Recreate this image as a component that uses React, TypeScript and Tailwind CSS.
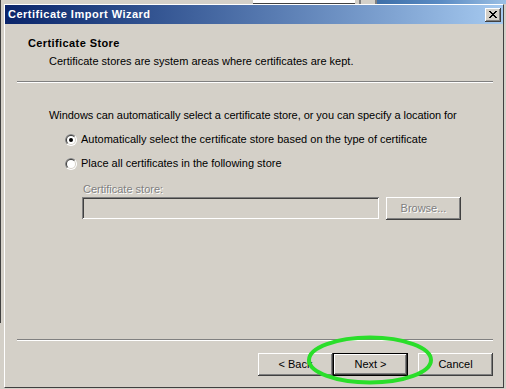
import React from "react";

function Radio({ checked }: { checked?: boolean }) {
  const r1 = 6, r2 = 5;
  const d = (r: number) => {
    const k = r / Math.SQRT2;
    return `M ${6 - k} ${6 + k} A ${r} ${r} 0 0 1 ${6 + k} ${6 - k} Z`;
  };
  return (
    <svg width="12" height="12" viewBox="0 0 12 12" className="shrink-0">
      <circle cx="6" cy="6" r={r1} fill="#ffffff" />
      <path d={d(r1)} fill="#808080" />
      <circle cx="6" cy="6" r={r2} fill="#d4d0c8" />
      <path d={d(r2)} fill="#404040" />
      <circle cx="6" cy="6" r="4" fill="#ffffff" />
      {checked && <circle cx="6" cy="6" r="2" fill="#000000" />}
    </svg>
  );
}

const raised =
  "shadow-[inset_-1px_-1px_#404040,inset_1px_1px_#ffffff,inset_-2px_-2px_#808080,inset_2px_2px_#d4d0c8]";
const raisedDefault =
  "shadow-[inset_-1px_-1px_#000000,inset_1px_1px_#000000,inset_-2px_-2px_#404040,inset_2px_2px_#ffffff,inset_-3px_-3px_#808080]";
const sunken =
  "shadow-[inset_1px_1px_#808080,inset_-1px_-1px_#ffffff,inset_2px_2px_#404040,inset_-2px_-2px_#d4d0c8]";

function Sep({ className = "" }: { className?: string }) {
  return <div className={`h-[2px] border-t border-t-[#808080] border-b border-b-white ${className}`} />;
}

export default function App() {
  return (
    <div className="w-[506px] h-[389px] bg-[#d4d0c8] relative overflow-hidden font-['Liberation_Sans',Arial,sans-serif] text-[11px] leading-[13px] text-black">
      {/* top background strip */}
      <div className="h-[4px] flex">
        <div className="w-[1px] bg-[#404040]" />
        <div className="w-[252px] bg-[#d4d0c8]" />
        <div className="w-[102px] bg-white border-b border-b-[#404040]" />
        <div className="w-[4px] bg-[#d4d0c8]" />
        <div className="w-[2px] bg-[#808080]" />
        <div className="w-[14px] bg-[#d4d0c8]" />
        <div className="w-[2px] bg-[#808080]" />
        <div className="flex-1 bg-gradient-to-r from-[#3d6fa8] via-[#5b8cc4] to-[#9cc0e4]" />
      </div>
      <div className="flex h-[385px]">
        <div className="w-[4px] flex">
          <div className="w-[1px] h-[319px] bg-[#404040]" />
        </div>
        {/* dialog */}
        <div className="w-[500px] h-[384px] border-t border-l border-white border-r border-b border-r-[#404040] border-b-[#404040] flex flex-col">
          {/* title bar */}
          <div className="h-[19px] flex items-center bg-gradient-to-r from-[#0a246a] to-[#a6caf0] pl-[3px] pr-[2px]">
            <span className="flex-1 font-bold text-white text-[11px] leading-[13px] tracking-[0.5px]">Certificate Import Wizard</span>
            <div className={`w-[16px] h-[14px] bg-[#d4d0c8] ${raised} flex items-center justify-center`}>
              <svg width="8" height="7" viewBox="0 0 8 7">
                <path d="M0 0h2v1h1v1h2V1h1V0h2v1H7v1H6v1H5v1h1v1h1v1h1v1H6V6H5V5H3v1H2v1H0V6h1V5h1V4h1V3H2V2H1V1H0z" fill="#000" />
              </svg>
            </div>
          </div>
          {/* body */}
          <div className="flex-1 flex flex-col">
            <div className="pt-[13px] pl-[23px] font-bold tracking-[0.4px]">Certificate Store</div>
            <div className="mt-[5px] pl-[44px]">Certificate stores are system areas where certificates are kept.</div>
            <Sep className="mt-[13px] ml-[12px] mr-[10px]" />
            <div className="mt-[26px] pl-[44px] tracking-[-0.05px]">
              Windows can automatically select a certificate store, or you can specify a location for
            </div>
            <div className="mt-[11px] pl-[60px] flex items-center gap-[4px] h-[13px]">
              <Radio checked />
              <span>Automatically select the certificate store based on the type of certificate</span>
            </div>
            <div className="mt-[11px] pl-[60px] flex items-center gap-[4px] h-[13px]">
              <Radio />
              <span>Place all certificates in the following store</span>
            </div>
            <div className="mt-[13px] pl-[78px] text-[#808080] [text-shadow:1px_1px_0_#ffffff]">Certificate store:</div>
            <div className="mt-[1px] pl-[77px] flex items-start gap-[7px]">
              <div className={`w-[297px] h-[22px] bg-[#d4d0c8] ${sunken}`} />
              <div
                className={`w-[75px] h-[23px] ${raised} flex items-center justify-center text-[#808080] [text-shadow:1px_1px_0_#ffffff]`}
              >
                Browse...
              </div>
            </div>
            <div className="flex-1" />
            <Sep className="ml-[12px] mr-[10px]" />
            <div className="mt-[12px] mb-[11px] flex justify-end pr-[10px]">
              <div className={`w-[75px] h-[23px] ${raised} flex items-center justify-center`}>&lt; Back</div>
              <div className={`w-[75px] h-[23px] ${raisedDefault} flex items-center justify-center`}>Next &gt;</div>
              <div className={`ml-[10px] w-[75px] h-[23px] ${raised} flex items-center justify-center`}>Cancel</div>
            </div>
          </div>
        </div>
      </div>
      {/* green highlight ellipse */}
      <svg className="absolute left-0 top-0 pointer-events-none" width="506" height="389">
        <ellipse cx="370" cy="360" rx="61" ry="22.5" fill="none" stroke="#2ade2a" strokeWidth="4" />
      </svg>
    </div>
  );
}
